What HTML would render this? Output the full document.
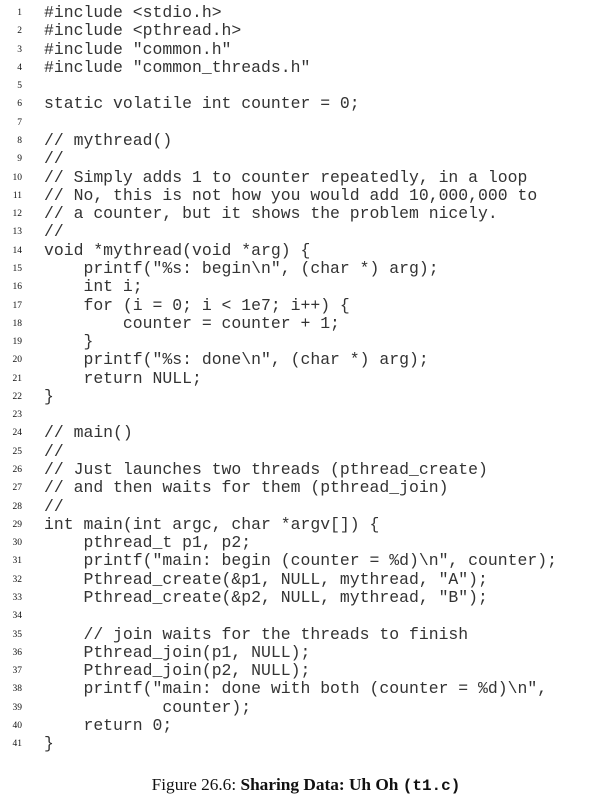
<!DOCTYPE html>
<html><head><style>
body{margin:0;width:590px;height:798px;background:#fff;position:relative;overflow:hidden;color:#111}
pre{position:absolute;left:44px;top:4px;margin:0;font-family:"Liberation Mono",monospace;font-size:16.45px;line-height:18.275px;font-weight:normal;color:#333}
.ln{position:absolute;left:0;top:4px;width:22px;text-align:right;font-family:"Liberation Serif",serif;font-size:9.5px;line-height:18.275px;margin:0;white-space:pre;color:#111}
.cap{position:absolute;left:0;width:612px;top:775px;text-align:center;font-family:"Liberation Serif",serif;font-size:17.3px}
.cap code{font-family:"Liberation Mono",monospace;font-weight:bold;font-size:16px}
</style></head><body>
<pre class="ln">1
2
3
4
5
6
7
8
9
10
11
12
13
14
15
16
17
18
19
20
21
22
23
24
25
26
27
28
29
30
31
32
33
34
35
36
37
38
39
40
41</pre>
<pre>#include &lt;stdio.h&gt;
#include &lt;pthread.h&gt;
#include "common.h"
#include "common_threads.h"

static volatile int counter = 0;

// mythread()
//
// Simply adds 1 to counter repeatedly, in a loop
// No, this is not how you would add 10,000,000 to
// a counter, but it shows the problem nicely.
//
void *mythread(void *arg) {
    printf("%s: begin\n", (char *) arg);
    int i;
    for (i = 0; i &lt; 1e7; i++) {
        counter = counter + 1;
    }
    printf("%s: done\n", (char *) arg);
    return NULL;
}

// main()
//
// Just launches two threads (pthread_create)
// and then waits for them (pthread_join)
//
int main(int argc, char *argv[]) {
    pthread_t p1, p2;
    printf("main: begin (counter = %d)\n", counter);
    Pthread_create(&amp;p1, NULL, mythread, "A");
    Pthread_create(&amp;p2, NULL, mythread, "B");

    // join waits for the threads to finish
    Pthread_join(p1, NULL);
    Pthread_join(p2, NULL);
    printf("main: done with both (counter = %d)\n",
            counter);
    return 0;
}</pre>
<div class="cap">Figure 26.6: <b>Sharing Data: Uh Oh <code>(t1.c)</code></b></div>
</body></html>
